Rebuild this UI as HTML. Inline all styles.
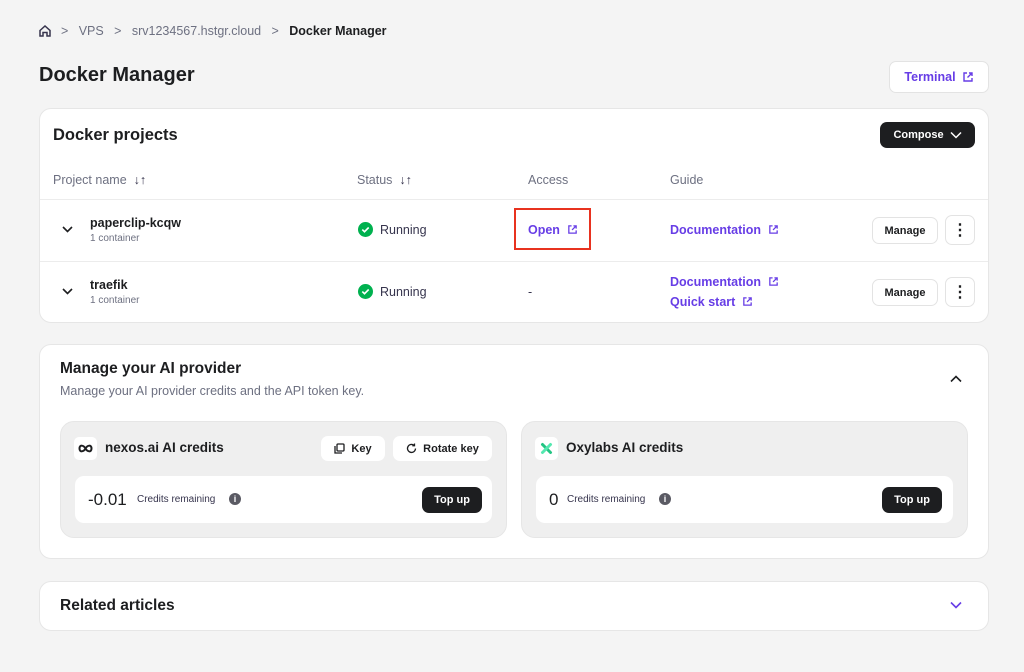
<!DOCTYPE html>
<html><head><meta charset="utf-8"><style>
*{box-sizing:border-box;margin:0;padding:0}
body{width:1024px;height:672px;background:#f4f4f4;font-family:"Liberation Sans",sans-serif;color:#1d1e20;position:relative;overflow:hidden}
.a{position:absolute}
.card{position:absolute;background:#fff;border:1px solid #e6e6e6;border-radius:12px}
.t{position:absolute;white-space:nowrap;line-height:1}
.btn{position:absolute;background:#fff;border:1px solid #e3e3e3;border-radius:7px;font-size:11px;font-weight:bold;display:flex;align-items:center;justify-content:center;gap:6px}
.dark{background:#1d1e20;color:#fff;border:none}
.purple{color:#673de6;font-weight:bold;font-size:12.5px}
.gray{color:#6d7081}
.line{position:absolute;height:1px;background:#ececec}
</style></head><body>
<svg class="a" style="left:38px;top:24px" width="14" height="14" viewBox="0 0 14 14" fill="none" stroke="#36344d" stroke-width="1.5"><path d="M2 6.5L7 2l5 4.5V12H9V8.5H5V12H2z"/></svg>
<div class="t gray" style="left:61px;top:25px;font-size:12.5px">&gt;&nbsp;&nbsp; VPS &nbsp;&nbsp;&gt;&nbsp;&nbsp; srv1234567.hstgr.cloud &nbsp;&nbsp;&gt;&nbsp;&nbsp; <b style="color:#1d1e20">Docker Manager</b></div>
<div class="t" style="left:39px;top:65px;font-size:20px;font-weight:bold">Docker Manager</div>
<div class="btn" style="left:889px;top:61px;width:100px;height:32px;color:#673de6;font-size:12.5px">Terminal <svg width="12" height="12" viewBox="0 0 12 12" fill="none" stroke="#673de6" stroke-width="1.4"><path d="M5 2H2v8h8V7M7 2h3v3M10 2L5.5 6.5"/></svg></div>

<div class="card" style="left:39px;top:108px;width:950px;height:215px"></div>
<div class="t" style="left:53px;top:127px;font-size:16.5px;font-weight:bold">Docker projects</div>
<div class="btn dark" style="left:880px;top:122px;width:95px;height:26px">Compose <svg width="12" height="8" viewBox="0 0 12 8" fill="none" stroke="#fff" stroke-width="1.5"><path d="M1 1.5l5 5 5-5"/></svg></div>
<div class="t gray" style="left:53px;top:174px;font-size:12.5px">Project name &nbsp;<b style="color:#36344d">↓↑</b></div>
<div class="t gray" style="left:357px;top:174px;font-size:12.5px">Status &nbsp;<b style="color:#36344d">↓↑</b></div>
<div class="t gray" style="left:528px;top:174px;font-size:12.5px">Access</div>
<div class="t gray" style="left:670px;top:174px;font-size:12.5px">Guide</div>
<div class="line" style="left:40px;top:199px;width:948px"></div>
<div class="line" style="left:40px;top:261px;width:948px"></div>

<svg class="a" style="left:62px;top:226px" width="11" height="7" viewBox="0 0 11 7" fill="none" stroke="#1d1e20" stroke-width="1.6"><path d="M1 1l4.5 4.5L10 1"/></svg>
<div class="t" style="left:90px;top:217px;font-size:12.5px;font-weight:bold">paperclip-kcqw</div>
<div class="t gray" style="left:90px;top:234px;font-size:10px">1 container</div>
<svg class="a" style="left:358px;top:222px" width="15" height="15" viewBox="0 0 15 15"><circle cx="7.5" cy="7.5" r="7.5" fill="#00b14f"/><path d="M4.3 7.6l2.2 2.1 4.2-4.2" fill="none" stroke="#fff" stroke-width="1.6"/></svg>
<div class="t" style="left:380px;top:224px;font-size:12.5px;color:#36344d">Running</div>
<div class="a" style="left:514px;top:208px;width:77px;height:42px;border:2px solid #e8321f"></div>
<div class="t purple" style="left:528px;top:224px">Open</div>
<svg class="a" style="left:567px;top:224px" width="11" height="11" viewBox="0 0 12 12" fill="none" stroke="#673de6" stroke-width="1.4"><path d="M5 2H2v8h8V7M7 2h3v3M10 2L5.5 6.5"/></svg>
<div class="t purple" style="left:670px;top:224px">Documentation</div>
<svg class="a" style="left:768px;top:224px" width="11" height="11" viewBox="0 0 12 12" fill="none" stroke="#673de6" stroke-width="1.4"><path d="M5 2H2v8h8V7M7 2h3v3M10 2L5.5 6.5"/></svg>
<div class="btn" style="left:872px;top:217px;width:66px;height:27px">Manage</div>
<div class="btn" style="left:945px;top:215px;width:30px;height:30px;font-size:16px">⋮</div>

<svg class="a" style="left:62px;top:288px" width="11" height="7" viewBox="0 0 11 7" fill="none" stroke="#1d1e20" stroke-width="1.6"><path d="M1 1l4.5 4.5L10 1"/></svg>
<div class="t" style="left:90px;top:279px;font-size:12.5px;font-weight:bold">traefik</div>
<div class="t gray" style="left:90px;top:296px;font-size:10px">1 container</div>
<svg class="a" style="left:358px;top:284px" width="15" height="15" viewBox="0 0 15 15"><circle cx="7.5" cy="7.5" r="7.5" fill="#00b14f"/><path d="M4.3 7.6l2.2 2.1 4.2-4.2" fill="none" stroke="#fff" stroke-width="1.6"/></svg>
<div class="t" style="left:380px;top:286px;font-size:12.5px;color:#36344d">Running</div>
<div class="t" style="left:528px;top:286px;font-size:12.5px;color:#36344d">-</div>
<div class="t purple" style="left:670px;top:276px">Documentation</div>
<svg class="a" style="left:768px;top:276px" width="11" height="11" viewBox="0 0 12 12" fill="none" stroke="#673de6" stroke-width="1.4"><path d="M5 2H2v8h8V7M7 2h3v3M10 2L5.5 6.5"/></svg>
<div class="t purple" style="left:670px;top:296px">Quick start</div>
<svg class="a" style="left:742px;top:296px" width="11" height="11" viewBox="0 0 12 12" fill="none" stroke="#673de6" stroke-width="1.4"><path d="M5 2H2v8h8V7M7 2h3v3M10 2L5.5 6.5"/></svg>
<div class="btn" style="left:872px;top:279px;width:66px;height:27px">Manage</div>
<div class="btn" style="left:945px;top:277px;width:30px;height:30px;font-size:16px">⋮</div>

<div class="card" style="left:39px;top:344px;width:950px;height:215px"></div>
<div class="t" style="left:60px;top:361px;font-size:15.5px;font-weight:bold">Manage your AI provider</div>
<div class="t gray" style="left:60px;top:385px;font-size:12.5px">Manage your AI provider credits and the API token key.</div>
<svg class="a" style="left:950px;top:375px" width="12" height="8" viewBox="0 0 12 8" fill="none" stroke="#1d1e20" stroke-width="1.6"><path d="M1 6.5l5-5 5 5"/></svg>

<div class="a" style="left:60px;top:421px;width:447px;height:117px;background:#efefef;border:1px solid #e6e6e6;border-radius:14px"></div>
<div class="a" style="left:74px;top:437px;width:23px;height:23px;background:#fff;border-radius:5px"></div>
<svg class="a" style="left:78px;top:443px" width="15" height="11" viewBox="0 0 15 11" fill="none" stroke="#1d1e20" stroke-width="2"><path d="M7.5 5.5C5.5 2 1.5 1.5 1.5 5.5S5.5 9 7.5 5.5C9.5 2 13.5 1.5 13.5 5.5S9.5 9 7.5 5.5"/></svg>
<div class="t" style="left:105px;top:441px;font-size:13.5px;font-weight:bold">nexos.ai AI credits</div>
<div class="btn" style="left:321px;top:436px;width:64px;height:25px;border:none"><svg width="11" height="11" viewBox="0 0 11 11" fill="none" stroke="#1d1e20" stroke-width="1.3"><rect x="3" y="1" width="7" height="7" rx="1"/><path d="M1 3v7h7"/></svg> Key</div>
<div class="btn" style="left:393px;top:436px;width:99px;height:25px;border:none"><svg width="11" height="11" viewBox="0 0 11 11" fill="none" stroke="#1d1e20" stroke-width="1.3"><path d="M9.5 5.5A4 4 0 1 1 8 2.3M8.5 0.5v2.2H6.3"/></svg> Rotate key</div>
<div class="a" style="left:75px;top:476px;width:417px;height:47px;background:#fff;border-radius:9px"></div>
<div class="t" style="left:88px;top:491px;font-size:17px">-0.01</div>
<div class="t" style="left:137px;top:495px;font-size:10px;color:#36344d">Credits remaining</div>
<div class="a" style="left:229px;top:493px;width:12px;height:12px;border-radius:50%;background:#5a5a63;color:#fff;font-size:9px;font-weight:bold;text-align:center;line-height:12px">i</div>
<div class="btn dark" style="left:422px;top:487px;width:60px;height:26px">Top up</div>

<div class="a" style="left:521px;top:421px;width:447px;height:117px;background:#efefef;border:1px solid #e6e6e6;border-radius:14px"></div>
<div class="a" style="left:535px;top:437px;width:23px;height:23px;background:#fff;border-radius:5px"></div>
<svg class="a" style="left:540px;top:442px" width="13" height="13" viewBox="0 0 13 13" stroke-width="3" stroke-linecap="round"><path d="M2.5 2.5l8 8" stroke="#23c483"/><path d="M10.5 2.5l-8 8" stroke="#55e8b0"/></svg>
<div class="t" style="left:566px;top:441px;font-size:13.5px;font-weight:bold">Oxylabs AI credits</div>
<div class="a" style="left:536px;top:476px;width:417px;height:47px;background:#fff;border-radius:9px"></div>
<div class="t" style="left:549px;top:491px;font-size:17px">0</div>
<div class="t" style="left:567px;top:495px;font-size:10px;color:#36344d">Credits remaining</div>
<div class="a" style="left:659px;top:493px;width:12px;height:12px;border-radius:50%;background:#5a5a63;color:#fff;font-size:9px;font-weight:bold;text-align:center;line-height:12px">i</div>
<div class="btn dark" style="left:882px;top:487px;width:60px;height:26px">Top up</div>

<div class="card" style="left:39px;top:581px;width:950px;height:50px"></div>
<div class="t" style="left:60px;top:598px;font-size:15.5px;font-weight:bold">Related articles</div>
<svg class="a" style="left:950px;top:601px" width="12" height="8" viewBox="0 0 12 8" fill="none" stroke="#673de6" stroke-width="1.6"><path d="M1 1.5l5 5 5-5"/></svg>
</body></html>
